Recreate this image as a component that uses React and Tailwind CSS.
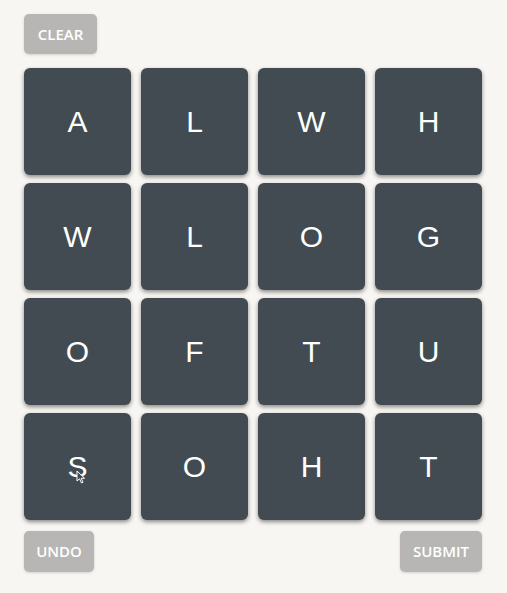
import React from "react";

const letters = ["A","L","W","H","W","L","O","G","O","F","T","U","S","O","H","T"];

export default function App() {
  return (
    <div className="min-h-[593px] w-[507px] bg-[#f8f6f2] pl-[24px] pr-[25px] pt-[14px]" style={{fontFamily: '"Open Sans", sans-serif'}}>
      <button className="h-[40px] w-[73px] rounded-[5px] bg-[#b7b6b4] text-[15px] font-semibold text-white shadow-[0_1px_3px_rgba(0,0,0,0.15)]">CLEAR</button>
      <div className="mt-[14px] grid grid-cols-4 gap-x-[10px] gap-y-[8px]">
        {letters.map((l, i) => (
          <div key={i} className="relative flex h-[107px] items-center justify-center rounded-[6px] bg-[#414b51] text-[30px] text-white shadow-[0_2px_4px_rgba(0,0,0,0.45)]" style={{fontFamily: '"Liberation Sans", Arial, sans-serif'}}>
            {l}
            {i === 12 && (
              <svg className="absolute left-[52px] top-[57px]" width="10" height="14" viewBox="0 0 10 14">
                <path d="M1 1 L1 11 L3.5 8.8 L5.5 13 L7 12.3 L5.2 8.3 L8.6 8.3 Z" fill="#414b51" stroke="white" strokeWidth="1" strokeLinejoin="round" />
              </svg>
            )}
          </div>
        ))}
      </div>
      <div className="mt-[11px] flex justify-between">
        <button className="h-[41px] w-[70px] rounded-[5px] bg-[#b7b6b4] text-[15px] font-semibold text-white shadow-[0_1px_3px_rgba(0,0,0,0.15)]">UNDO</button>
        <button className="h-[41px] w-[82px] rounded-[5px] bg-[#b7b6b4] text-[15px] font-semibold text-white shadow-[0_1px_3px_rgba(0,0,0,0.15)]">SUBMIT</button>
      </div>
    </div>
  );
}
